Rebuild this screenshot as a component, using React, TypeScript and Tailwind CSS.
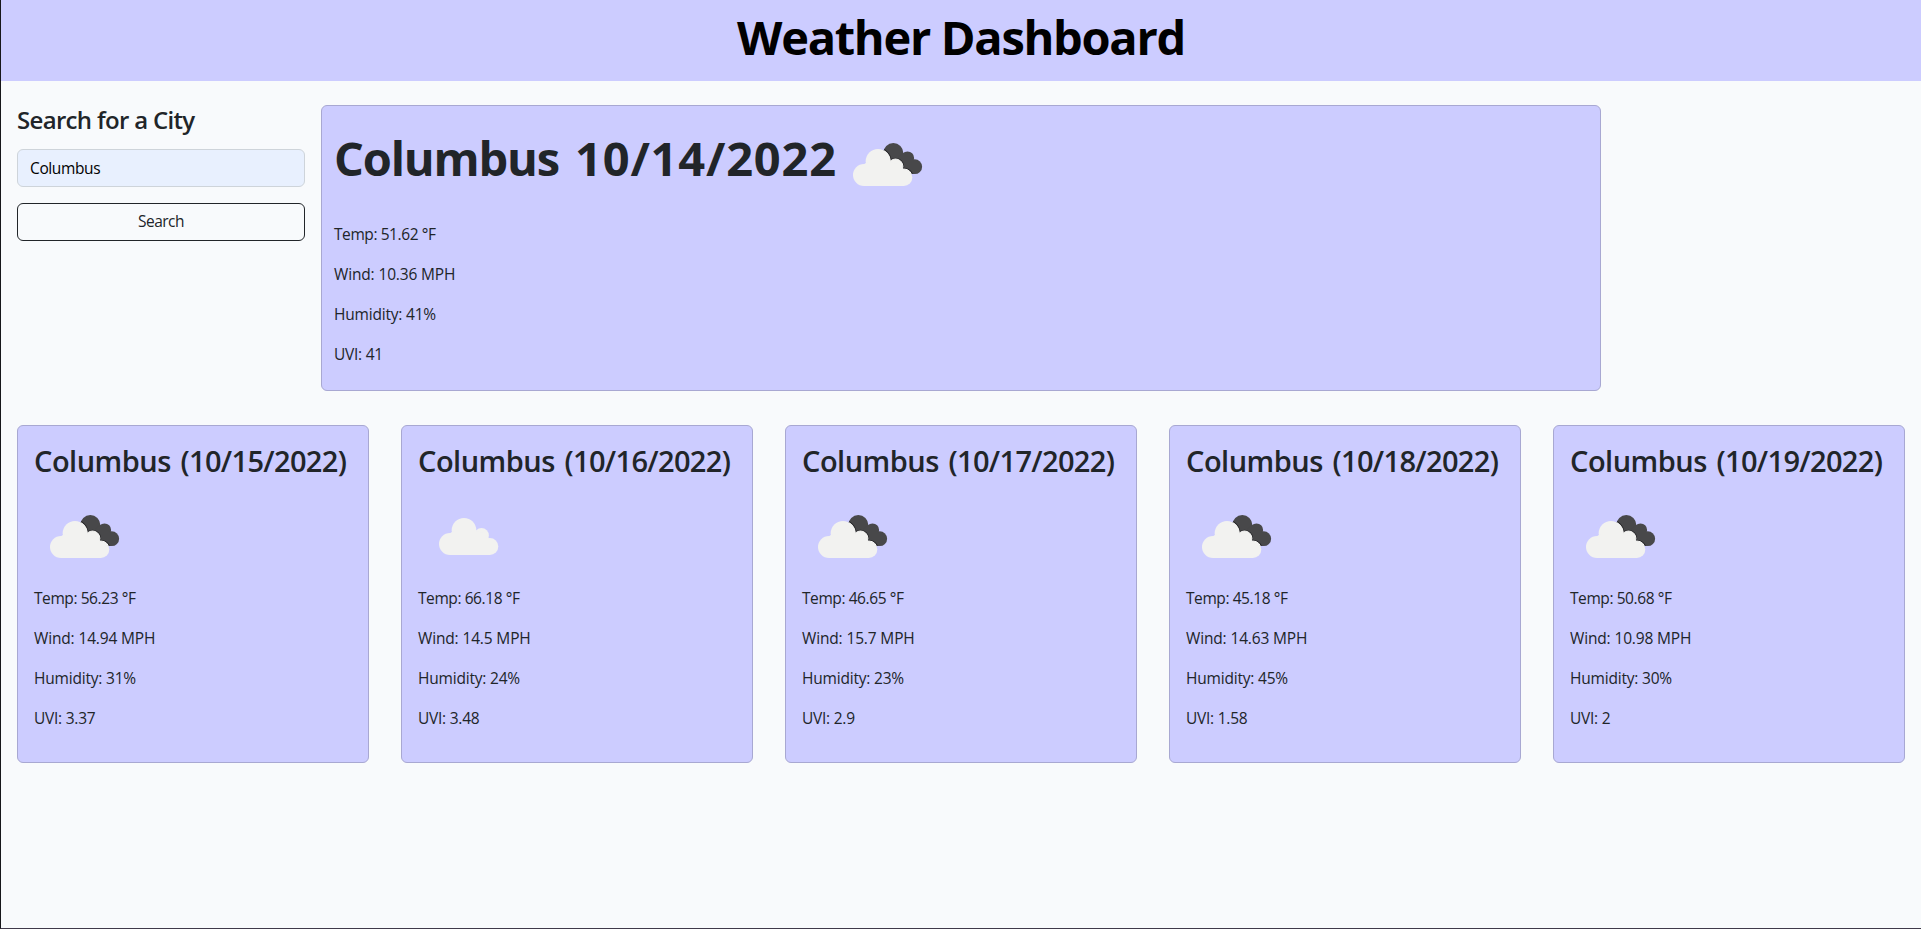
type Sky = "broken" | "scattered";

interface Reading {
  date: string;
  sky: Sky;
  temp: string;
  wind: string;
  humidity: string;
  uvi: string;
}

const city = "Columbus";

const today: Reading = { date: "10/14/2022", sky: "broken", temp: "51.62", wind: "10.36", humidity: "41", uvi: "41" };

const forecast: Reading[] = [
  { date: "10/15/2022", sky: "broken", temp: "56.23", wind: "14.94", humidity: "31", uvi: "3.37" },
  { date: "10/16/2022", sky: "scattered", temp: "66.18", wind: "14.5", humidity: "24", uvi: "3.48" },
  { date: "10/17/2022", sky: "broken", temp: "46.65", wind: "15.7", humidity: "23", uvi: "2.9" },
  { date: "10/18/2022", sky: "broken", temp: "45.18", wind: "14.63", humidity: "45", uvi: "1.58" },
  { date: "10/19/2022", sky: "broken", temp: "50.68", wind: "10.98", humidity: "30", uvi: "2" },
];

function FrontCloud() {
  return (
    <>
      <circle cx="27" cy="61" r="11" />
      <circle cx="41" cy="47.3" r="12.3" />
      <circle cx="58.5" cy="52.4" r="7.4" />
      <circle cx="66.8" cy="63.5" r="8.5" />
      <path d="M27 72V50.2L28.8 49L53 48L60 50L67 56V72Z" />
    </>
  );
}

function BackCloud() {
  return (
    <>
      <circle cx="56.3" cy="39" r="10" />
      <circle cx="70.5" cy="44" r="6.6" />
      <circle cx="77.7" cy="52.7" r="7.4" />
      <path d="M56 47L65 40L77 46L77 60L70 59Z" />
    </>
  );
}

function SkyIcon({ sky }: { sky: Sky }) {
  return (
    <svg viewBox="0 0 100 100" className="block size-[100px] shrink-0">
      {sky === "broken" ? (
        <>
          <defs>
            <clipPath id="back-cloud">
              <BackCloud />
            </clipPath>
          </defs>
          <g fill="#48484a">
            <BackCloud />
          </g>
          <g clipPath="url(#back-cloud)">
            <g stroke="#29292b" strokeWidth="2.6">
              <FrontCloud />
            </g>
            <g stroke="#ffffff" strokeWidth="1">
              <FrontCloud />
            </g>
          </g>
          <g fill="#f2f2f0">
            <FrontCloud />
          </g>
        </>
      ) : (
        <g fill="#f2f2f0" transform="translate(5 -3)">
          <FrontCloud />
        </g>
      )}
    </svg>
  );
}

function Readings({ data }: { data: Reading }) {
  return (
    <div className="flex flex-col gap-4 pb-4 leading-6">
      <p className="tracking-[-0.42px]">Temp: {data.temp} °F</p>
      <p className="tracking-[-0.15px]">Wind: {data.wind} MPH</p>
      <p className="tracking-[-0.2px]">Humidity: {data.humidity}%</p>
      <p className="tracking-[-0.25px]">UVI: {data.uvi}</p>
    </div>
  );
}

export default function App() {
  return (
    <div className="h-screen overflow-hidden border-b border-l border-b-[#3f3a4a] border-l-[#16161a] bg-[#f8fafc] font-['Open_Sans',sans-serif] text-[15.5px] text-[#212529]">
      <header className="flex h-[81px] justify-center bg-[#ccccff] pt-2">
        <h1 className="text-[47px] leading-[58px] font-bold tracking-[-1.3px] text-black">Weather Dashboard</h1>
      </header>

      <main className="px-4 pt-6">
        <div className="flex items-start gap-4">
          <aside className="w-72 shrink-0">
            <h2 className="mb-[15px] text-2xl leading-[29px] font-semibold tracking-[-0.68px]">Search for a City</h2>
            <input
              defaultValue={city}
              className="block h-[38px] w-full rounded-md border border-[#ced4da] bg-[#e8f0fe] px-3 tracking-[-0.38px] text-black outline-none"
            />
            <button className="mt-4 block h-[38px] w-full rounded-md border border-[#212529] tracking-[-0.5px]">
              Search
            </button>
          </aside>

          <section className="w-[1280px] rounded-md border border-[#a8a8d2] bg-[#ccccff] px-3 py-2">
            <div className="mb-2 flex h-[100px]">
              <h2 className="w-[503px] shrink-0 pt-[15px] text-[47px] leading-[58px] font-bold whitespace-nowrap">
                <span className="tracking-[-1.2px]">{city}</span>{" "}
                <span className="ml-1 tracking-[0.8px]">{today.date}</span>
              </h2>
              <SkyIcon sky={today.sky} />
            </div>
            <Readings data={today} />
          </section>
        </div>

        <section className="mt-[34px] grid grid-cols-5 gap-8">
          {forecast.map((day) => (
            <article key={day.date} className="h-[338px] rounded-md border border-[#a8a8d2] bg-[#ccccff] p-4">
              <h3 className="mb-1.5 text-[29px] leading-[38px] font-semibold whitespace-nowrap">
                <span className="tracking-[-0.5px]">{city}</span>{" "}
                <span className="ml-0.5 tracking-[-0.65px]">({day.date})</span>
              </h3>
              <SkyIcon sky={day.sky} />
              <Readings data={day} />
            </article>
          ))}
        </section>
      </main>
    </div>
  );
}
